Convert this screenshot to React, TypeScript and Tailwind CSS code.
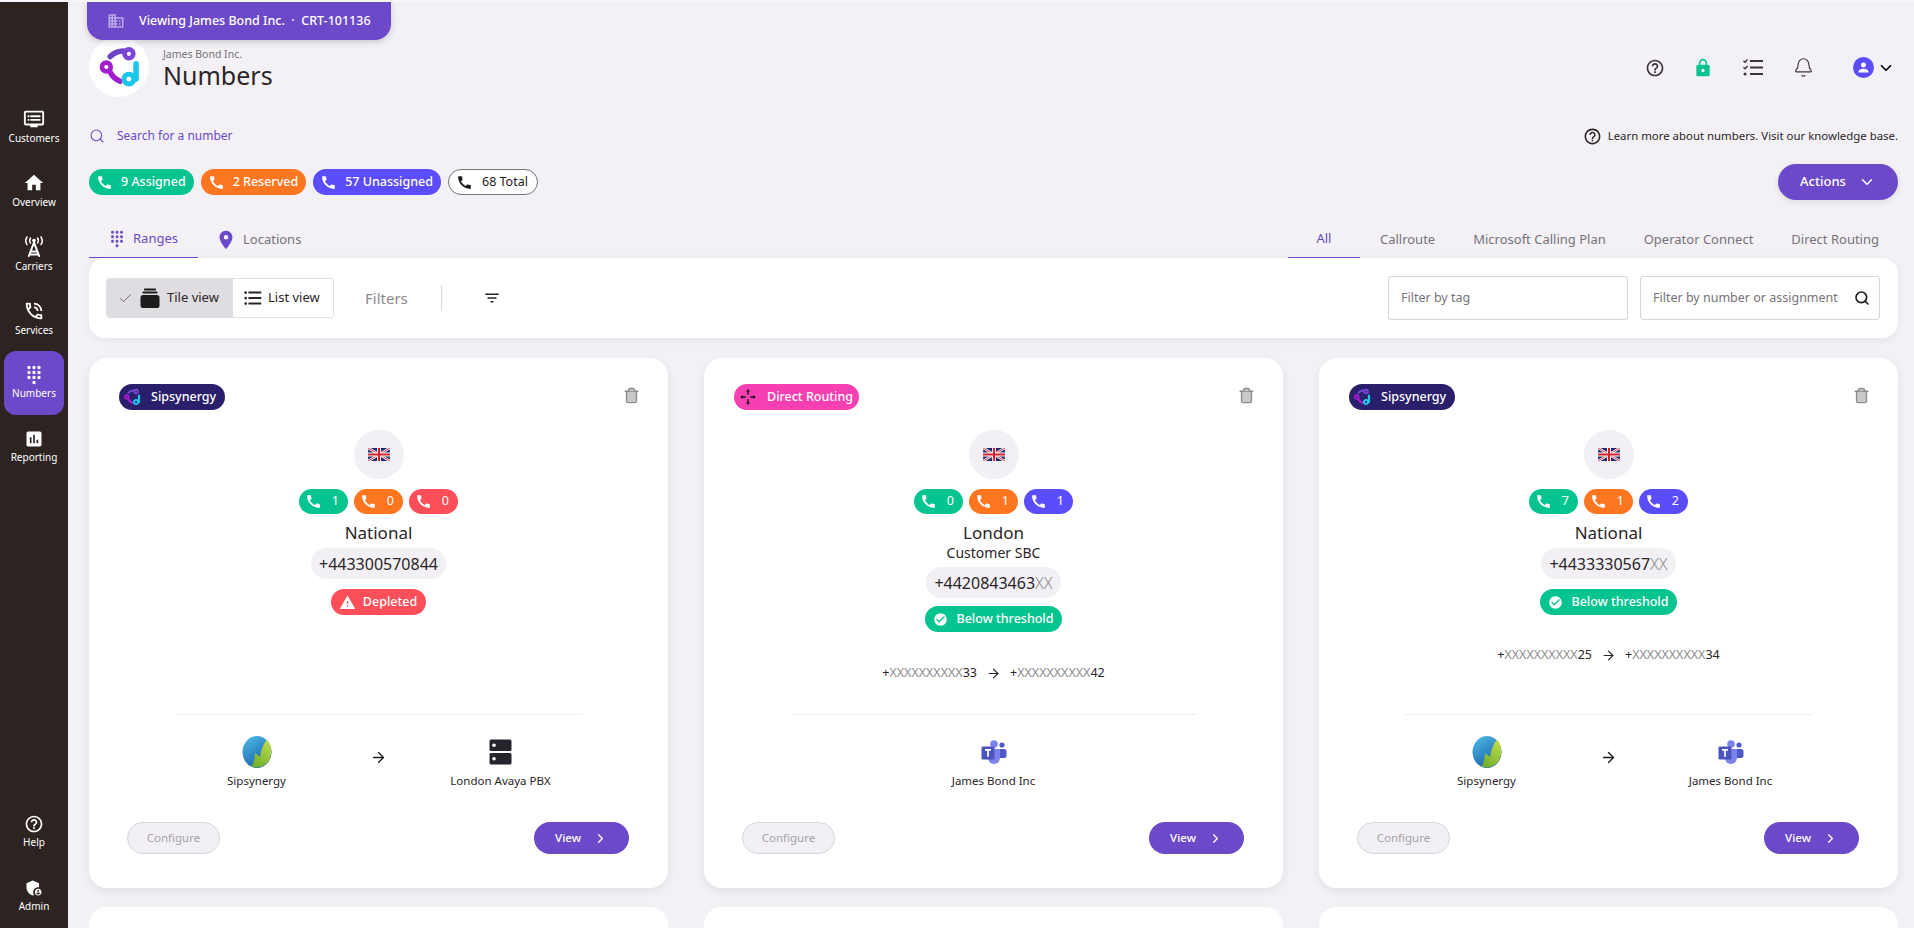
import type { ReactNode } from "react";
import { ArrowRight, Bell, Check, ChevronDown, ChevronRight, Search, Trash2 } from "lucide-react";
import {
  MdAdminPanelSettings,
  MdAssessment,
  MdCall,
  MdCheckCircle,
  MdDialpad,
  MdDomain,
  MdFilterList,
  MdFormatListBulleted,
  MdHelpOutline,
  MdHome,
  MdLocationOn,
  MdLock,
  MdOutlineDvr,
  MdOutlinePhoneInTalk,
  MdPerson,
  MdWarning,
} from "react-icons/md";

const GREEN = "bg-[#05c48f]";
const ORANGE = "bg-[#ff7620]";
const BLUE = "bg-[#5b4dfb]";
const RED = "bg-[#fc4f59]";

function TowerIcon() {
  return (
    <svg width="22" height="22" viewBox="0 0 22 22" fill="none" stroke="currentColor" strokeLinecap="round">
      <path d="M11 6.500L5.800 20M11 6.500L16.200 20M7.500 15.500h7M6.500 18.500h9" strokeWidth="2" />
      <circle cx="11" cy="4.500" r="1.800" fill="currentColor" stroke="none" />
      <path d="M7.500 2c-1 1.500-1 3.500 0 5M14.500 2c1 1.500 1 3.500 0 5" strokeWidth="1.500" />
      <path d="M4 1c-1.500 2.500-1.500 5.500 0 7.500M18 1c1.500 2.500 1.500 5.500 0 7.500" strokeWidth="1.500" />
    </svg>
  );
}

const NAV_TOP = [
  { label: "Customers", icon: <MdOutlineDvr size={22} /> },
  { label: "Overview", icon: <MdHome size={22} /> },
  { label: "Carriers", icon: <TowerIcon /> },
  { label: "Services", icon: <MdOutlinePhoneInTalk size={22} /> },
  { label: "Numbers", icon: <MdDialpad size={20} />, active: true },
  { label: "Reporting", icon: <MdAssessment size={20} /> },
];

function Logo({ size }: { size: number }) {
  return (
    <svg width={size} height={size} viewBox="14 12 40 38" fill="none" strokeLinecap="round">
      <path d="M26 21.500C29 18.500 33 16.500 38 16.500" stroke="#6b46c9" strokeWidth="5" />
      <circle cx="43" cy="19" r="4" stroke="#7c45d8" strokeWidth="4.200" />
      <path d="M26.500 36.500Q29 41.500 35 44" stroke="#a21fd0" strokeWidth="5" />
      <circle cx="22.500" cy="31" r="4" stroke="#a21fd0" strokeWidth="4.200" />
      <path d="M49.500 28V42" stroke="#1cc6ea" strokeWidth="5" />
      <circle cx="43" cy="42" r="4.500" stroke="#1cc6ea" strokeWidth="4.500" />
    </svg>
  );
}

function UkFlag() {
  return (
    <svg width="22" height="13" viewBox="0 0 60 36">
      <rect width="60" height="36" fill="#1f2a6b" />
      <path d="M0 0l60 36M60 0L0 36" stroke="#fff" strokeWidth="7" />
      <path d="M0 0l60 36M60 0L0 36" stroke="#d3202f" strokeWidth="2.500" />
      <path d="M30 0v36M0 18h60" stroke="#fff" strokeWidth="11" />
      <path d="M30 0v36M0 18h60" stroke="#d3202f" strokeWidth="6" />
    </svg>
  );
}

function SipGlobe({ id }: { id: string }) {
  return (
    <svg width="30" height="32" viewBox="0 0 30 32">
      <defs>
        <linearGradient id={`${id}b`} x1="0" y1="0" x2="0.6" y2="1">
          <stop offset="0" stopColor="#4fc0ea" />
          <stop offset="1" stopColor="#1b5fa8" />
        </linearGradient>
        <linearGradient id={`${id}g`} x1="0.8" y1="0" x2="0.3" y2="1">
          <stop offset="0" stopColor="#c2dc4a" />
          <stop offset="1" stopColor="#6fae2f" />
        </linearGradient>
      </defs>
      <ellipse cx="15" cy="16" rx="14.500" ry="16" fill={`url(#${id}b)`} />
      <path d="M25 3.500C30 9 31 19 26 26 22 31 15 33 9.500 30.500 11.500 27 13 22 13 17L18 21C19 15 21 8 25 3.500z" fill={`url(#${id}g)`} />
    </svg>
  );
}

function TeamsLogo() {
  return (
    <svg width="26" height="24" viewBox="0 0 26 24">
      <circle cx="21" cy="5" r="2.600" fill="#5059c9" />
      <rect x="17" y="9" width="8.500" height="9" rx="2.500" fill="#5059c9" />
      <circle cx="13" cy="4" r="3.800" fill="#7b83eb" />
      <path d="M7 9h12v9a6 6 0 0 1-12 0z" fill="#7b83eb" />
      <rect x="0.500" y="6.500" width="13" height="13" rx="1.200" fill="#4b53bc" />
      <path d="M4 9.800h6M7 9.800v7" stroke="#fff" strokeWidth="1.700" />
    </svg>
  );
}

function ServerIcon() {
  return (
    <svg width="23" height="26" viewBox="0 0 23 26" fill="#27232a">
      <rect x="0.500" y="0.500" width="22" height="11.500" rx="1.500" />
      <rect x="0.500" y="14" width="22" height="11.500" rx="1.500" />
      <circle cx="5" cy="6.200" r="1.800" fill="#fff" />
      <circle cx="5" cy="19.700" r="1.800" fill="#fff" />
    </svg>
  );
}

function ChecklistIcon() {
  return (
    <svg width="20" height="17" viewBox="0 0 20 17" fill="none" stroke="#3a3538" strokeWidth="1.800">
      <path d="M7 2h13M7 8.500h13M7 15h13" />
      <path d="M0.500 1.800l1.500 1.500L4.500 0.500M0.500 8.300l1.500 1.500 2.500-2.800" strokeWidth="1.400" />
      <circle cx="2" cy="15" r="1.500" fill="#3a3538" stroke="none" />
    </svg>
  );
}

function TileIcon() {
  return (
    <svg width="20" height="20" viewBox="0 0 20 20" fill="#1e1b1c">
      <rect x="0.500" y="7" width="19" height="13" rx="2.500" />
      <rect x="2.500" y="3.600" width="15" height="1.800" rx="0.600" />
      <rect x="4" y="0.600" width="12" height="1.800" rx="0.600" />
    </svg>
  );
}

function RoutingIcon() {
  return (
    <svg width="16" height="16" viewBox="0 0 16 16" fill="#241022">
      <path d="M8 0l2 2.600H8.700v3.200H7.300V2.600H6zM8 16l-2-2.600h1.300v-3.200h1.400v3.200H10zM0 8l2.600-2v1.300h3.200v1.400H2.600V10zM16 8l-2.600 2V8.700h-3.200V7.300h3.200V6z" />
    </svg>
  );
}

function SummaryPill({ color, text }: { color: string; text: string }) {
  return (
    <div className={`flex h-[26px] items-center gap-[8px] rounded-full pl-[7px] pr-[8px] text-[12.5px] font-medium text-white ${color}`}>
      <MdCall size={17} />
      {text}
    </div>
  );
}

function CountPill({ color, n }: { color: string; n: number }) {
  return (
    <div className={`flex h-[25px] w-[49px] items-center justify-between rounded-full pl-[6px] pr-[9px] text-[12.5px] text-white ${color}`}>
      <MdCall size={17} />
      {n}
    </div>
  );
}

function Range({ from, to }: { from: string; to: string }) {
  return (
    <div className="flex items-center gap-[9px] text-[12.5px] text-[#2b2527]">
      <span>+<span className="text-[#8f8b8d]">XXXXXXXXXX</span>{from}</span>
      <ArrowRight size={15} strokeWidth={1.8} />
      <span>+<span className="text-[#8f8b8d]">XXXXXXXXXX</span>{to}</span>
    </div>
  );
}

function Endpoint({ icon, label }: { icon: ReactNode; label: string }) {
  return (
    <div className="flex w-[200px] flex-col items-center">
      <div className="flex h-[34px] items-center">{icon}</div>
      <div className="mt-[3px] text-[11.5px] text-[#2b2527]">{label}</div>
    </div>
  );
}

type CardProps = {
  id: string;
  badge: "sip" | "direct";
  counts: { color: string; n: number }[];
  name: string;
  sub?: string;
  number: string;
  hidden?: string;
  depleted?: boolean;
  range?: { from: string; to: string };
  endpoints: "sipPbx" | "teams" | "sipTeams";
};

function RangeCard(c: CardProps) {
  return (
    <div className="flex h-[530px] flex-col rounded-[18px] bg-white shadow-[0_3px_10px_rgba(40,30,60,0.08)]">
      <div className="flex items-start justify-between pl-[30px] pr-[28px] pt-[26px]">
        {c.badge === "sip" ? (
          <div className="flex h-[26px] w-[106px] items-center gap-[10px] rounded-full bg-[#2a1f6b] pl-[4px] text-[12.5px] font-medium text-white">
            <Logo size={18} />
            Sipsynergy
          </div>
        ) : (
          <div className="flex h-[26px] w-[125px] items-center gap-[11px] rounded-full bg-[#f63fb0] pl-[6px] text-[12.5px] font-medium text-white">
            <RoutingIcon />
            Direct Routing
          </div>
        )}
        <Trash2 size={17} className="mt-[3px] text-[#8f8d8f]" fill="#c9c8ca" />
      </div>

      <div className="mt-[20px] flex flex-col items-center">
        <div className="flex h-[49px] w-[50px] items-center justify-center rounded-full bg-[#f2f0f4]">
          <UkFlag />
        </div>
        <div className="mt-[10px] flex gap-[6px]">
          {c.counts.map((p, i) => (
            <CountPill key={i} color={p.color} n={p.n} />
          ))}
        </div>
        <div className="mt-[7px] text-[17px] leading-[24px] text-[#2b2527]">{c.name}</div>
        {c.sub && <div className="mb-[3px] text-[14px] leading-[16px] text-[#2b2527]">{c.sub}</div>}
        <div className="mt-[3px] flex h-[31px] items-center rounded-full bg-[#f2f0f4] px-[8px] text-[16px] text-[#2b2527]">
          {c.number}
          <span className="font-light text-[#8f8b8d]">{c.hidden ?? ""}</span>
        </div>
        {c.depleted ? (
          <div className={`mt-[10px] flex h-[26px] items-center gap-[7px] rounded-full pl-[8px] pr-[9px] text-[12.5px] font-medium text-white ${RED}`}>
            <MdWarning size={17} />
            Depleted
          </div>
        ) : (
          <div className={`${c.sub ? "mt-[8px]" : "mt-[10px]"} flex h-[26px] items-center gap-[9px] rounded-full pl-[8px] pr-[9px] text-[12.5px] font-medium text-white ${GREEN}`}>
            <MdCheckCircle size={15} />
            Below threshold
          </div>
        )}
        {c.range && (
          <div className={c.sub ? "mt-[32px]" : "mt-[31px]"}>
            <Range from={c.range.from} to={c.range.to} />
          </div>
        )}
      </div>

      <div className="mt-auto">
        <div className="mx-[86px] border-t border-[#f0eef2]" />
        <div className="mt-[20px] flex h-[60px] items-start justify-center">
          {c.endpoints === "teams" ? (
            <Endpoint icon={<TeamsLogo />} label="James Bond Inc" />
          ) : (
            <>
              <Endpoint icon={<SipGlobe id={c.id} />} label="Sipsynergy" />
              <div className="flex h-[44px] w-[44px] items-center justify-center">
                <ArrowRight size={17} strokeWidth={1.8} className="text-[#1e1b1c]" />
              </div>
              {c.endpoints === "sipPbx" ? (
                <Endpoint icon={<ServerIcon />} label="London Avaya PBX" />
              ) : (
                <Endpoint icon={<TeamsLogo />} label="James Bond Inc" />
              )}
            </>
          )}
        </div>
        <div className="mt-[27px] flex items-center justify-between pb-[34px] pl-[38px] pr-[39px]">
          <div className="flex h-[32px] w-[93px] items-center justify-center rounded-full border border-[#d9d7db] bg-[#f2f0f4] text-[11.5px] text-[#a5a3a7]">
            Configure
          </div>
          <div className="flex h-[32px] w-[95px] items-center justify-center gap-[12px] rounded-full bg-[#6c49c8] text-[11.5px] font-medium text-white">
            View
            <ChevronRight size={15} />
          </div>
        </div>
      </div>
    </div>
  );
}

export default function App() {
  return (
    <div
      className="relative flex h-screen overflow-hidden border-t-2 border-[#f7f6f8] bg-[#f3f1f5] text-[#2b2527]"
      style={{ fontFamily: '"Noto Sans", "Open Sans", sans-serif' }}
    >
      {/* side nav */}
      <aside className="flex w-[68px] shrink-0 flex-col bg-[#2d2422] pt-[93px] text-white">
        {NAV_TOP.map((n) => (
          <div
            key={n.label}
            className={`mx-[4px] flex h-[64px] flex-col items-center justify-center gap-[1px] rounded-[12px] text-[10px] ${n.active ? "bg-[#6c49c8]" : ""}`}
          >
            {n.icon}
            {n.label}
          </div>
        ))}
        <div className="mt-auto">
          <div className="flex h-[64px] flex-col items-center justify-center gap-[1px] text-[10px]">
            <MdHelpOutline size={20} />
            Help
          </div>
          <div className="flex h-[64px] flex-col items-center justify-center gap-[1px] text-[10px]">
            <MdAdminPanelSettings size={20} />
            Admin
          </div>
        </div>
      </aside>

      <main className="min-w-0 flex-1 pl-[21px] pr-[16px]">
        {/* header */}
        <div className="flex h-[100px] items-start justify-between pt-[35px]">
          <div className="flex items-center gap-[14px]">
            <div className="flex h-[60px] w-[60px] items-center justify-center rounded-full bg-white">
              <Logo size={44} />
            </div>
            <div className="pt-[5px]">
              <div className="text-[10.5px] leading-[12px] text-[#77727a]">James Bond Inc.</div>
              <div className="text-[25px] leading-[31px]">Numbers</div>
            </div>
          </div>
          <div className="flex items-center pr-[3px] pt-[20px] text-[#3a3538]">
            <MdHelpOutline size={20} />
            <MdLock size={20} className="ml-[28px] text-[#05c48f]" />
            <div className="ml-[30px]">
              <ChecklistIcon />
            </div>
            <Bell size={21} strokeWidth={1.3} className="ml-[30px]" />
            <div className="ml-[39px] flex h-[21px] w-[21px] items-center justify-center rounded-full bg-[#5b4dfb]">
              <MdPerson size={15} className="text-white" />
            </div>
            <ChevronDown size={18} strokeWidth={2.2} className="ml-[3px] text-black" />
          </div>
        </div>

        {/* search */}
        <div className="mt-[24px] flex h-[20px] items-center justify-between">
          <div className="flex items-center gap-[12px] text-[12px] text-[#6c49c8]">
            <Search size={16} strokeWidth={1.6} />
            Search for a number
          </div>
          <div className="flex items-center gap-[6px] text-[11.4px]">
            <MdHelpOutline size={19} />
            Learn more about numbers. Visit our knowledge base.
          </div>
        </div>

        {/* totals */}
        <div className="mt-[18px] flex h-[36px] items-center justify-between">
          <div className="flex items-center gap-[7px]">
            <SummaryPill color={GREEN} text="9 Assigned" />
            <SummaryPill color={ORANGE} text="2 Reserved" />
            <SummaryPill color={BLUE} text="57 Unassigned" />
            <div className="flex h-[26px] items-center gap-[9px] rounded-full border border-[#77727a] bg-white pl-[7px] pr-[9px] text-[12.5px] text-[#1e1b1c]">
              <MdCall size={17} />
              68 Total
            </div>
          </div>
          <div className="flex h-[36px] w-[120px] items-center justify-center gap-[12px] rounded-full bg-[#6c49c8] text-[13px] font-medium text-white shadow-[0_2px_6px_rgba(40,30,60,0.1)]">
            Actions
            <ChevronDown size={18} />
          </div>
        </div>

        {/* tabs */}
        <div className="mt-[21px] flex h-[37px] justify-between text-[13px] text-[#77727a]">
          <div className="flex">
            <div className="flex w-[109px] items-center gap-[7px] border-b border-[#6c49c8] pl-[19px] text-[#6c49c8]">
              <MdDialpad size={18} />
              Ranges
            </div>
            <div className="flex items-center gap-[6px] pl-[17px]">
              <MdLocationOn size={22} className="text-[#6c49c8]" />
              Locations
            </div>
          </div>
          <div className="flex">
            <div className="flex w-[72px] items-center justify-center border-b border-[#6c49c8] text-[#6c49c8]">All</div>
            <div className="flex items-center pl-[20px]">Callroute</div>
            <div className="flex items-center pl-[38px]">Microsoft Calling Plan</div>
            <div className="flex items-center pl-[38px]">Operator Connect</div>
            <div className="flex items-center pl-[38px] pr-[19px]">Direct Routing</div>
          </div>
        </div>

        {/* filter bar */}
        <div className="flex h-[80px] items-center justify-between rounded-[16px] bg-white pl-[17px] pr-[18px] shadow-[0_2px_8px_rgba(40,30,60,0.06)]">
          <div className="flex items-center">
            <div className="flex h-[40px] overflow-hidden rounded-[3px] border border-[#e2e0e4] text-[13px]">
              <div className="flex w-[126px] items-center gap-[7px] bg-[#dfdde1] pl-[11px]">
                <Check size={15} strokeWidth={1} />
                <TileIcon />
                Tile view
              </div>
              <div className="flex w-[100px] items-center gap-[4px] pl-[9px]">
                <MdFormatListBulleted size={22} />
                List view
              </div>
            </div>
            <div className="ml-[31px] text-[15px] text-[#8f8b8d]">Filters</div>
            <div className="ml-[33px] h-[26px] border-l border-[#d9d7db]" />
            <MdFilterList size={18} className="ml-[41px]" />
          </div>
          <div className="flex items-center gap-[12px]">
            <div className="flex h-[44px] w-[240px] items-center rounded-[3px] border border-[#d6d4d8] px-[12px] text-[12.5px] text-[#77727a]">
              Filter by tag
            </div>
            <div className="flex h-[44px] w-[240px] items-center justify-between rounded-[3px] border border-[#d6d4d8] pl-[12px] pr-[9px] text-[12.5px] text-[#77727a]">
              Filter by number or assignment
              <Search size={16} strokeWidth={2.4} className="text-[#1e1b1c]" />
            </div>
          </div>
        </div>

        {/* range cards */}
        <div className="mt-[20px] grid grid-cols-3 gap-x-[36px] gap-y-[19px]">
          <RangeCard
            id="c1"
            badge="sip"
            counts={[{ color: GREEN, n: 1 }, { color: ORANGE, n: 0 }, { color: RED, n: 0 }]}
            name="National"
            number="+443300570844"
            depleted
            endpoints="sipPbx"
          />
          <RangeCard
            id="c2"
            badge="direct"
            counts={[{ color: GREEN, n: 0 }, { color: ORANGE, n: 1 }, { color: BLUE, n: 1 }]}
            name="London"
            sub="Customer SBC"
            number="+4420843463"
            hidden="XX"
            range={{ from: "33", to: "42" }}
            endpoints="teams"
          />
          <RangeCard
            id="c3"
            badge="sip"
            counts={[{ color: GREEN, n: 7 }, { color: ORANGE, n: 1 }, { color: BLUE, n: 2 }]}
            name="National"
            number="+4433330567"
            hidden="XX"
            range={{ from: "25", to: "34" }}
            endpoints="sipTeams"
          />
          <div className="h-[200px] rounded-[18px] bg-white" />
          <div className="h-[200px] rounded-[18px] bg-white" />
          <div className="h-[200px] rounded-[18px] bg-white" />
        </div>
      </main>

      {/* account banner */}
      <div className="absolute left-[87px] top-0 flex h-[38px] w-[304px] items-center gap-[14px] rounded-b-[16px] bg-[#6c49c8] pl-[20px] text-[12.5px] font-medium text-white shadow-[0_2px_6px_rgba(40,30,60,0.2)]">
        <MdDomain size={18} className="text-[#b9a9e8]" />
        <span>Viewing James Bond Inc.&nbsp; ·&nbsp; CRT-101136</span>
      </div>
    </div>
  );
}
